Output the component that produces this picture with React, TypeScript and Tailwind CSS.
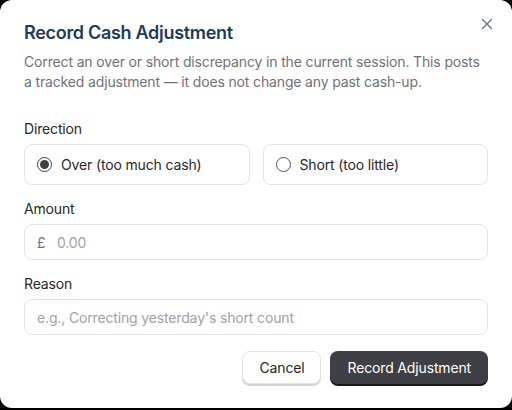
import React, { useState } from "react";

function Radio({ checked, label, onClick }: { checked: boolean; label: string; onClick: () => void }) {
  return (
    <button
      type="button"
      onClick={onClick}
      className="flex h-[41px] flex-1 items-center gap-[9px] rounded-lg border border-[#e4e4e7] bg-white px-[12px] text-left"
    >
      <span
        className={
          checked
            ? "flex h-[15px] w-[15px] items-center justify-center rounded-full border border-[#3f3f46]"
            : "flex h-[15px] w-[15px] items-center justify-center rounded-full border border-[#52525b]"
        }
      >
        {checked && <span className="h-[9px] w-[9px] rounded-full bg-[#3f3f46]" />}
      </span>
      <span className="text-[14px] text-[#27272a]">{label}</span>
    </button>
  );
}

export default function App() {
  const [dir, setDir] = useState<"over" | "short">("over");

  return (
    <div
      className="h-[410px] w-[512px] bg-black tracking-[-0.15px]"
      style={{ fontFamily: "Inter, 'Noto Sans', sans-serif" }}
    >
      <div className="relative flex h-[408px] flex-col rounded-xl bg-white px-6 pt-[19px]">
        <button type="button" className="absolute right-[19px] top-[18px] text-[#64748b]">
          <svg width="12" height="12" viewBox="0 0 12 12" fill="none" stroke="currentColor" strokeWidth="1.4" strokeLinecap="round">
            <path d="M1.5 1.5l9 9M10.5 1.5l-9 9" />
          </svg>
        </button>

        <h2 className="text-[18px] font-semibold leading-7 tracking-[-0.3px] text-[#1e3a5c]">Record Cash Adjustment</h2>
        <p className="mt-[5px] text-[14px] leading-5 text-[#71717a]">
          Correct an over or short discrepancy in the current session. This posts a tracked adjustment — it does not change any past cash-up.
        </p>

        <div className="mt-[27px] flex flex-col gap-[5px]">
          <label className="text-[14px] leading-5 text-[#27272a]">Direction</label>
          <div className="flex gap-[13px]">
            <Radio checked={dir === "over"} label="Over (too much cash)" onClick={() => setDir("over")} />
            <Radio checked={dir === "short"} label="Short (too little)" onClick={() => setDir("short")} />
          </div>
        </div>

        <div className="mt-[14px] flex flex-col gap-[5px]">
          <label className="text-[14px] leading-5 text-[#27272a]">Amount</label>
          <div className="flex h-[36px] items-center rounded-lg border border-[#e4e4e7] bg-white px-[12px]">
            <span className="w-[20px] text-[14px] text-[#71717a]">£</span>
            <input
              placeholder="0.00"
              className="flex-1 bg-transparent text-[14px] text-[#27272a] outline-none placeholder:text-[#a1a1aa]"
            />
          </div>
        </div>

        <div className="mt-[14px] flex flex-col gap-[5px]">
          <label className="text-[14px] leading-5 text-[#27272a]">Reason</label>
          <input
            placeholder="e.g., Correcting yesterday's short count"
            className="h-[36px] rounded-lg border border-[#e4e4e7] bg-white px-[12px] text-[14px] text-[#27272a] outline-none placeholder:text-[#a1a1aa]"
          />
        </div>

        <div className="mt-[16px] flex justify-end gap-[9px]">
          <button
            type="button"
            className="h-[33px] rounded-lg border border-[#e4e4e7] bg-white px-[16px] text-[14px] text-[#27272a] shadow-[0_2px_0_#d4d4d8]"
          >
            Cancel
          </button>
          <button
            type="button"
            className="h-[33px] rounded-lg bg-[#3f3f46] px-[17px] text-[14px] text-white shadow-[0_2px_0_#18181b]"
          >
            Record Adjustment
          </button>
        </div>
      </div>
    </div>
  );
}
